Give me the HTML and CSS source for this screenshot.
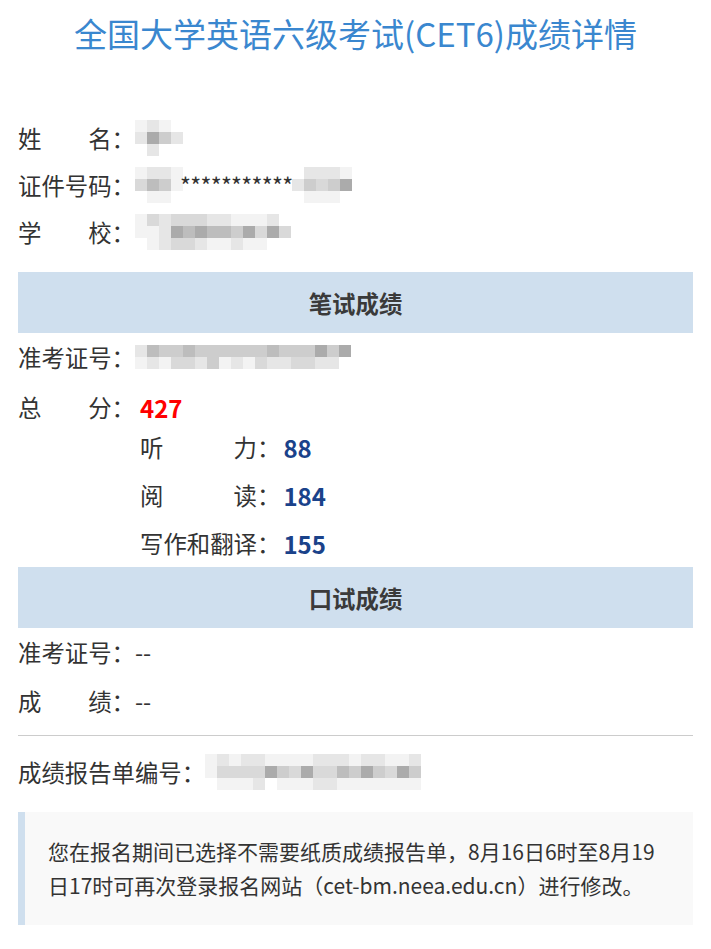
FILE: index.html
```html
<!DOCTYPE html>
<html lang="zh-CN">
<head>
<meta charset="utf-8">
<title>全国大学英语六级考试(CET6)成绩详情</title>
<link rel="stylesheet" href="styles.css">
</head>
<body>
<div class="page">
  <h1 class="title">全国大学英语六级考试(CET6)成绩详情</h1>

  <div class="info">
    <div class="row"><span class="label l4">姓名</span><span class="colon">：</span>
      <span class="mosaic">
        <span class="mr"><i class="m1"></i><i class="m2"></i><i class="m1"></i><i class="m0"></i></span>
        <span class="mr"><i class="m2"></i><i class="m6"></i><i class="m4"></i><i class="m2"></i></span>
        <span class="mr"><i class="m0"></i><i class="m2"></i><i class="m0"></i><i class="m0"></i></span>
      </span>
    </div>
    <div class="row"><span class="label l4">证件号码</span><span class="colon">：</span>
      <span class="mosaic">
        <span class="mr"><i class="m1"></i><i class="m2"></i><i class="m2"></i><i class="m1"></i></span>
        <span class="mr"><i class="m3"></i><i class="m5"></i><i class="m4"></i><i class="m1"></i></span>
        <span class="mr"><i class="m0"></i><i class="m1"></i><i class="m1"></i><i class="m0"></i></span>
      </span><span class="stars">***********</span><span class="mosaic">
        <span class="mr"><i class="m0"></i><i class="m2"></i><i class="m2"></i><i class="m2"></i><i class="m1"></i></span>
        <span class="mr"><i class="m2"></i><i class="m4"></i><i class="m3"></i><i class="m4"></i><i class="m6"></i></span>
        <span class="mr"><i class="m0"></i><i class="m1"></i><i class="m1"></i><i class="m1"></i><i class="m0"></i></span>
      </span>
    </div>
    <div class="row"><span class="label l4">学校</span><span class="colon">：</span>
      <span class="mosaic">
        <span class="mr"><i class="m1"></i><i class="m3"></i><i class="m2"></i><i class="m3"></i><i class="m3"></i><i class="m3"></i><i class="m2"></i><i class="m2"></i><i class="m1"></i><i class="m1"></i><i class="m1"></i><i class="m2"></i><i class="m0"></i></span>
        <span class="mr"><i class="m1"></i><i class="m1"></i><i class="m2"></i><i class="m6"></i><i class="m5"></i><i class="m6"></i><i class="m5"></i><i class="m5"></i><i class="m4"></i><i class="m6"></i><i class="m3"></i><i class="m6"></i><i class="m3"></i></span>
        <span class="mr"><i class="m0"></i><i class="m1"></i><i class="m2"></i><i class="m3"></i><i class="m3"></i><i class="m2"></i><i class="m1"></i><i class="m1"></i><i class="m2"></i><i class="m1"></i><i class="m1"></i><i class="m0"></i><i class="m0"></i></span>
      </span>
    </div>
  </div>

  <div class="band">笔试成绩</div>

  <div class="row"><span class="label l4">准考证号</span><span class="colon">：</span>
    <span class="mosaic">
      <span class="mr"><i class="m2"></i><i class="m5"></i><i class="m4"></i><i class="m4"></i><i class="m5"></i><i class="m4"></i><i class="m4"></i><i class="m4"></i><i class="m4"></i><i class="m4"></i><i class="m4"></i><i class="m5"></i><i class="m4"></i><i class="m4"></i><i class="m4"></i><i class="m6"></i><i class="m4"></i><i class="m6"></i></span>
      <span class="mr"><i class="m1"></i><i class="m2"></i><i class="m1"></i><i class="m3"></i><i class="m3"></i><i class="m2"></i><i class="m4"></i><i class="m1"></i><i class="m2"></i><i class="m1"></i><i class="m3"></i><i class="m2"></i><i class="m2"></i><i class="m3"></i><i class="m3"></i><i class="m2"></i><i class="m2"></i><i class="m0"></i></span>
    </span>
  </div>
  <div class="row total"><span class="label l4">总分</span><span class="colon">：</span><span class="score-total">427</span></div>
  <div class="subs">
    <div class="row"><span class="label l5">听力</span><span class="colon">：</span><span class="score-sub">88</span></div>
    <div class="row"><span class="label l5">阅读</span><span class="colon">：</span><span class="score-sub">184</span></div>
    <div class="row"><span class="label l5">写作和翻译</span><span class="colon">：</span><span class="score-sub">155</span></div>
  </div>

  <div class="band">口试成绩</div>

  <div class="row"><span class="label l4">准考证号</span><span class="colon">：</span><span class="val">--</span></div>
  <div class="row oral-score"><span class="label l4">成绩</span><span class="colon">：</span><span class="val">--</span></div>

  <hr class="divider">

  <div class="row"><span class="label">成绩报告单编号</span><span class="colon">：</span>
    <span class="mosaic">
      <span class="mr"><i class="m1"></i><i class="m2"></i><i class="m1"></i><i class="m2"></i><i class="m2"></i><i class="m1"></i><i class="m1"></i><i class="m1"></i><i class="m1"></i><i class="m2"></i><i class="m2"></i><i class="m2"></i><i class="m1"></i><i class="m2"></i><i class="m2"></i><i class="m1"></i><i class="m1"></i><i class="m2"></i></span>
      <span class="mr"><i class="m1"></i><i class="m3"></i><i class="m3"></i><i class="m3"></i><i class="m3"></i><i class="m6"></i><i class="m4"></i><i class="m3"></i><i class="m6"></i><i class="m3"></i><i class="m3"></i><i class="m5"></i><i class="m4"></i><i class="m6"></i><i class="m4"></i><i class="m3"></i><i class="m6"></i><i class="m4"></i></span>
      <span class="mr"><i class="m0"></i><i class="m1"></i><i class="m1"></i><i class="m1"></i><i class="m2"></i><i class="m0"></i><i class="m1"></i><i class="m1"></i><i class="m1"></i><i class="m2"></i><i class="m2"></i><i class="m1"></i><i class="m1"></i><i class="m1"></i><i class="m1"></i><i class="m1"></i><i class="m1"></i><i class="m1"></i></span>
    </span>
  </div>

  <div class="note">您在报名期间已选择不需要纸质成绩报告单，8月16日6时至8月19日17时可再次登录报名网站（cet-bm.neea.edu.cn）进行修改。</div>
</div>
</body>
</html>
```

FILE: styles.css
```css
html, body {
  margin: 0;
  padding: 0;
  background: #fff;
}
body {
  font-family: "Noto Sans CJK SC", "Microsoft YaHei", sans-serif;
  color: #333;
  font-size: 23.4px;
}
.page {
  padding: 0 18px;
}
.title {
  margin: 0;
  text-align: center;
  font-size: 33px;
  font-weight: 400;
  line-height: 66px;
  color: #3a87cf;
}
.info {
  margin-top: 48px;
}
.info .row {
  height: 47px;
}
.row {
  display: flex;
  align-items: center;
  height: 48px;
  white-space: nowrap;
}
.label {
  display: inline-block;
}
.l4 {
  width: 4em;
  text-align: justify;
  text-align-last: justify;
}
.l5 {
  width: 5em;
  text-align: justify;
  text-align-last: justify;
}
.colon {
  display: inline-block;
  width: 1em;
}
.stars {
  color: #333;
  letter-spacing: -0.7px;
  margin-left: -3px;
}
.mosaic {
  display: inline-flex;
  flex-direction: column;
}
.mr {
  display: flex;
}
.mr i {
  display: block;
  width: 12px;
  height: 12px;
}
.m0 { background: #fff; }
.m1 { background: #f3f3f3; }
.m2 { background: #e6e6e6; }
.m3 { background: #d9d9d9; }
.m4 { background: #cdcdcd; }
.m5 { background: #bdbdbd; }
.m6 { background: #ababab; }
.band {
  margin-top: 17px;
  height: 61px;
  background: #cfdfee;
  display: flex;
  align-items: center;
  justify-content: center;
  font-weight: 700;
  color: #3a3a3a;
}
.subs + .band {
  margin-top: 0;
}
.total {
  margin-top: 2px;
}
.score-total {
  color: #ff0000;
  font-weight: 700;
  font-size: 24px;
  padding-left: 5px;
}
.subs {
  padding-left: 122px;
  margin-top: -8px;
}
.score-sub {
  color: #1a428a;
  font-weight: 700;
  font-size: 24px;
  padding-left: 3px;
}
.oral-score {
  margin-top: 1px;
}
.divider {
  margin: 10px 0 12px;
  border: 0;
  border-top: 1px solid #cccccc;
}
.note {
  margin-top: 16px;
  background: #f9f9f9;
  border-left: 7px solid #cfdfee;
  padding: 23px 30px 23px 23px;
  font-size: 21px;
  line-height: 33.5px;
  color: #333;
}
```
